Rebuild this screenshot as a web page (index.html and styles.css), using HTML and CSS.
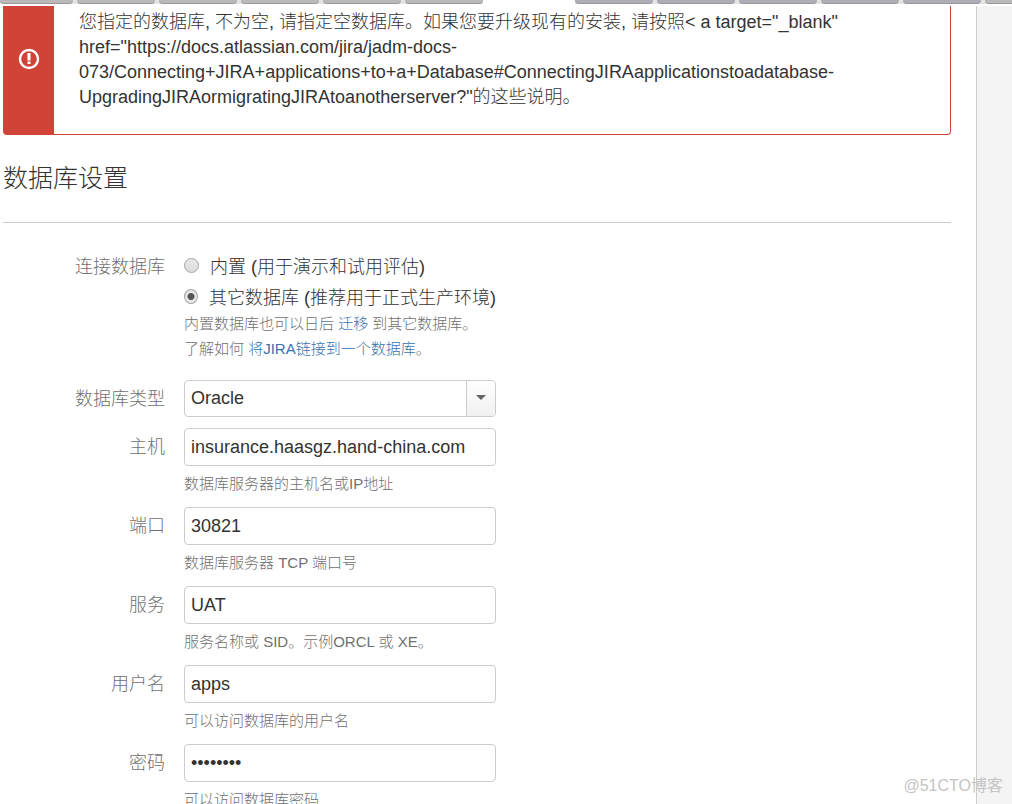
FILE: index.html
```html
<!DOCTYPE html>
<html lang="zh-CN">
<head>
  <meta charset="UTF-8">
  <title>数据库设置</title>
  <link rel="stylesheet" href="styles.css">
</head>
<body>

  <!-- Bottom edge of the tab strip -->
  <div class="tabs">
    <span class="tab first"></span>
    <span class="tab"></span>
    <span class="tab"></span>
    <span class="tab"></span>
    <span class="tab"></span>
    <span class="tab"></span>
    <span class="tab active"></span>
    <span class="tab dark"></span>
    <span class="tab dark"></span>
    <span class="tab dark"></span>
    <span class="tab dark"></span>
    <span class="tab dark"></span>
    <span class="tab"></span>
  </div>

  <div class="page">
    <main class="content">

      <div class="alert" role="alert">
        <div class="alert-icon">
          <svg width="22" height="22" viewBox="0 0 22 22">
            <circle cx="11" cy="11" r="9" fill="none" stroke="#fff" stroke-width="2.4"/>
            <path d="M9.5 5h3v7.5h-3zM9.5 13.5h3v2.5h-3z" fill="#fff"/>
          </svg>
        </div>
        <p class="alert-text">您指定的数据库, 不为空, 请指定空数据库。如果您要升级现有的安装, 请按照&lt; a target="_blank"<br>href="https://docs.atlassian.com/jira/jadm-docs-<br>073/Connecting+JIRA+applications+to+a+Database#ConnectingJIRAapplicationstoadatabase-<br>UpgradingJIRAormigratingJIRAtoanotherserver?"的这些说明。</p>
      </div>

      <h2>数据库设置</h2>

      <form class="db-form">
        <div class="row connection" role="radiogroup" aria-labelledby="connLabel">
          <span class="label" id="connLabel">连接数据库</span>
          <div class="field">
            <div class="radio">
              <input type="radio" name="dbMode" id="internal">
              <label for="internal">内置 (用于演示和试用评估)</label>
            </div>
            <div class="radio">
              <input type="radio" name="dbMode" id="external" checked>
              <label for="external">其它数据库 (推荐用于正式生产环境)</label>
            </div>
            <p class="desc">内置数据库也可以日后 <a href="#">迁移</a> 到其它数据库。</p>
            <p class="desc">了解如何 <a href="#">将JIRA链接到一个数据库</a>。</p>
          </div>
        </div>

        <div class="row">
          <label class="label" for="dbType">数据库类型</label>
          <div class="field select">
            <select id="dbType">
              <option>Oracle</option>
            </select>
            <span class="arrow"></span>
          </div>
        </div>

        <div class="row">
          <label class="label" for="host">主机</label>
          <div class="field">
            <input class="text" type="text" id="host" value="insurance.haasgz.hand-china.com">
            <p class="desc">数据库服务器的主机名或IP地址</p>
          </div>
        </div>

        <div class="row">
          <label class="label" for="port">端口</label>
          <div class="field">
            <input class="text" type="text" id="port" value="30821">
            <p class="desc">数据库服务器 TCP 端口号</p>
          </div>
        </div>

        <div class="row">
          <label class="label" for="service">服务</label>
          <div class="field">
            <input class="text" type="text" id="service" value="UAT">
            <p class="desc">服务名称或 SID。示例ORCL 或 XE。</p>
          </div>
        </div>

        <div class="row">
          <label class="label" for="username">用户名</label>
          <div class="field">
            <input class="text" type="text" id="username" value="apps">
            <p class="desc">可以访问数据库的用户名</p>
          </div>
        </div>

        <div class="row">
          <label class="label" for="password">密码</label>
          <div class="field">
            <input class="text" type="password" id="password" value="password">
            <p class="desc">可以访问数据库密码</p>
          </div>
        </div>
      </form>

    </main>
    <aside class="side"></aside>
  </div>

  <div class="watermark">@51CTO博客</div>

</body>
</html>
```

FILE: styles.css
```css
* {
  box-sizing: border-box;
}
body {
  margin: 0;
  height: 100vh;
  overflow: hidden;
  display: flex;
  flex-direction: column;
  font-family: "Liberation Sans", "Noto Sans CJK SC", sans-serif;
  font-size: 18px;
  line-height: 25px;
  color: #333;
  background: #fff;
}

/* tab strip */
.tabs {
  display: flex;
  flex: none;
  gap: 4px;
  height: 4px;
  margin-bottom: 2px;
  overflow: hidden;
  background: #e4e4e4;
}
.tab {
  flex: none;
  width: 78px;
  background: #b9b9b9;
  border-bottom: 1px solid #999;
  border-radius: 0 0 4px 4px;
}
.tab.first { width: 73px; }
.tab.dark { background: #aeacb6; }
.tab.active {
  width: 84px;
  background: #fff;
  border: none;
  border-radius: 0;
  box-shadow: 0 0 0 4px #fff;
}

.page {
  display: flex;
  flex: 1;
  min-height: 0;
}
.content {
  flex: 1;
  padding: 0 25px 0 3px;
}
.side {
  width: 36px;
  background: #f4f4f4;
  border-left: 1px solid #ccc;
}

/* error message */
.alert {
  display: flex;
  border: 1px solid #d04437;
  border-top: none;
  border-radius: 0 0 4px 4px;
}
.alert-icon {
  width: 50px;
  padding-top: 42px;
  text-align: center;
  line-height: 0;
  background: #d04437;
}
.alert-text {
  flex: 1;
  margin: 0;
  padding: 4px 25px 24px;
  font-weight: 300;
}

h2 {
  margin: 26px 0 0;
  padding-bottom: 27px;
  border-bottom: 1px solid #ccc;
  font-size: 25px;
  font-weight: 300;
  line-height: 34px;
}

/* form */
.db-form {
  display: flex;
  flex-direction: column;
  gap: 11px;
  padding-top: 32px;
}
.row {
  display: flex;
  gap: 19px;
}
.row.connection {
  padding-bottom: 8px;
}
.label {
  width: 162px;
  padding-top: 7px;
  text-align: right;
  color: #707070;
  font-weight: 300;
}
.connection .label {
  padding-top: 0;
}
.field {
  width: 312px;
}
.radio {
  display: flex;
  gap: 11px;
  margin-bottom: 6px;
  white-space: nowrap;
  font-weight: 300;
}
.radio:nth-child(2) {
  margin-bottom: 0;
}
.radio input {
  appearance: none;
  width: 15px;
  height: 15px;
  margin: 3px 0 0;
  border: 1px solid #a5a5a5;
  border-radius: 50%;
  background: linear-gradient(#e8e8e8, #dcdcdc);
}
.radio input:checked {
  background: radial-gradient(circle, #555 3px, #e6e6e6 4px);
}
.text,
.select select {
  display: block;
  width: 100%;
  height: 38px;
  padding: 0 6px;
  border: 1px solid #ccc;
  border-radius: 4px;
  background: #fff;
  color: #333;
  font: inherit;
}
.select {
  position: relative;
}
.select select {
  height: 37px;
  appearance: none;
}
.arrow {
  position: absolute;
  top: 1px;
  right: 1px;
  bottom: 1px;
  width: 29px;
  display: flex;
  justify-content: center;
  padding-top: 14px;
  border-left: 1px solid #ccc;
  border-radius: 0 3px 3px 0;
  background: linear-gradient(#fff, #f0f0f0);
  pointer-events: none;
}
.arrow::before {
  content: "";
  height: 0;
  border: 5px solid transparent;
  border-top-color: #666;
  border-bottom: none;
}
.desc {
  margin: 0;
  color: #707070;
  font-size: 15px;
  font-weight: 300;
}
.text + .desc {
  margin-top: 5px;
}
a {
  color: #3572b0;
  text-decoration: none;
}

.watermark {
  position: absolute;
  right: 9px;
  bottom: 6px;
  color: #c4c4c4;
  font-size: 16px;
  line-height: 24px;
}
```
